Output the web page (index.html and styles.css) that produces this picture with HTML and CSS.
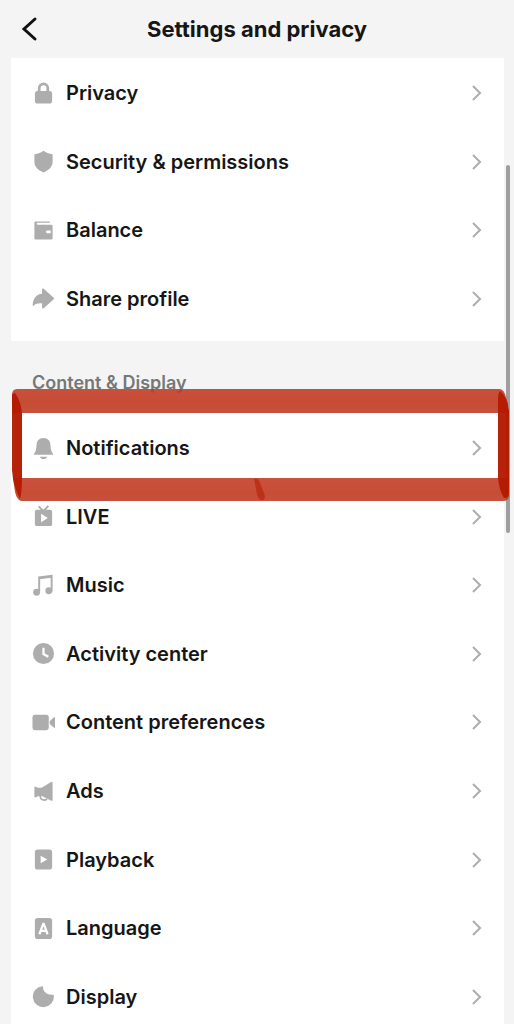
FILE: index.html
```html
<!DOCTYPE html>
<html lang="en">
<head>
<meta charset="utf-8">
<meta name="viewport" content="width=device-width, initial-scale=1">
<title>Settings and privacy</title>
<link rel="stylesheet" href="styles.css">
</head>
<body>
<svg class="defs" aria-hidden="true">
  <symbol id="chevron" viewBox="0 0 12 18"><path d="M2 2l7 7-7 7" fill="none" stroke="currentColor" stroke-width="2"/></symbol>
</svg>
<header class="header">
  <button class="back" type="button" aria-label="Back">
    <svg class="back-icon" viewBox="0 0 18 26"><path d="M15 3L4 13l11 10" fill="none" stroke="currentColor" stroke-width="3" stroke-linecap="round" stroke-linejoin="miter"/></svg>
  </button>
  <h1 class="title">Settings and privacy</h1>
</header>
<main class="content">
  <section class="card">
    <ul class="list list-account">
      <li class="row"><a class="link" href="#privacy">
        <svg class="icon" viewBox="0 0 24 24"><path d="M7.500 11V6.500a4.500 4.500 0 0 1 9 0V11" fill="none" stroke="currentColor" stroke-width="2.800"/><rect x="3" y="9.500" width="18" height="13" rx="3" fill="currentColor"/></svg>
        <span class="label">Privacy</span><svg class="chevron"><use href="#chevron"/></svg></a></li>
      <li class="row"><a class="link" href="#security">
        <svg class="icon" viewBox="0 0 24 24"><path d="M12 .8c2.500 2 5.600 3.200 9.500 3.700v8c0 5-4 8.500-9.500 11-5.500-2.500-9.500-6-9.500-11v-8C6.400 4 9.500 2.800 12 .8z" fill="currentColor"/></svg>
        <span class="label">Security &amp; permissions</span><svg class="chevron"><use href="#chevron"/></svg></a></li>
      <li class="row"><a class="link" href="#balance">
        <svg class="icon" viewBox="0 0 24 24"><path fill="currentColor" fill-rule="evenodd" d="M4 2.500h14.500V4H6a1 1 0 0 0 0 2h14a1.500 1.500 0 0 1 1.500 1.500V20a1.500 1.500 0 0 1-1.500 1.500H4A1.500 1.500 0 0 1 2.500 20V4A1.500 1.500 0 0 1 4 2.500zM16 12a1.400 1.400 0 0 0 0 2.800h3.500V12z"/></svg>
        <span class="label">Balance</span><svg class="chevron"><use href="#chevron"/></svg></a></li>
      <li class="row"><a class="link" href="#share">
        <svg class="icon" viewBox="0 0 24 24"><path fill="currentColor" d="M10.500 2.500a1 1 0 0 1 1.700-.7l10.500 9.300a1.200 1.200 0 0 1 0 1.800l-10.500 9.300a1 1 0 0 1-1.700-.8V17c-4-.3-6.500.5-8.800 2.500-.6.500-1 .2-1-.6C1 12 4.500 7.500 10.500 7z"/></svg>
        <span class="label">Share profile</span><svg class="chevron"><use href="#chevron"/></svg></a></li>
    </ul>
  </section>

  <h2 class="section-title">Content &amp; Display</h2>

  <section class="card card-display">
    <ul class="list list-display">
      <li class="row"><a class="link" href="#notifications">
        <svg class="icon" viewBox="0 0 24 24"><path fill="currentColor" d="M12 1c4.600 0 7.200 3.200 7.300 7.500.1 4.200 1 7 2.600 9 .3.500.1 1-.5 1H2.600c-.6 0-.8-.5-.5-1 1.600-2 2.500-4.800 2.600-9C4.800 4.200 7.400 1 12 1zM8 20.500h8c-.8 1.700-2.200 2.500-4 2.500s-3.200-.8-4-2.500z"/></svg>
        <span class="label">Notifications</span><svg class="chevron"><use href="#chevron"/></svg></a>
        <svg class="marker" viewBox="0 0 498 114" preserveAspectRatio="none" aria-hidden="true">
          <defs>
            <linearGradient id="band" x1="0" y1="0" x2="0" y2="1">
              <stop offset="0" stop-color="#bf3a24"/>
              <stop offset=".3" stop-color="#c2371e"/>
              <stop offset=".65" stop-color="#c03419"/>
              <stop offset="1" stop-color="#bb3a24"/>
            </linearGradient>
          </defs>
          <path d="M6 1H488Q492 1 494 6L497 16V25H1V7Q1 1 6 1z" fill="url(#band)" fill-opacity=".88"/>
          <path d="M2 90H498V107Q498 113 492 113H10Q6 112 4 104z" fill="url(#band)" fill-opacity=".88"/>
          <path d="M4 5Q10 13 11 25V90Q11 104 9 111Q2 98 1 82V8Q1 5 4 5zM489 3Q496 8 498 23V105Q498 110 493 110Q488 102 487 90V12Q487 5 489 3z" fill="#b41a00" fill-opacity=".96"/>
          <path d="M243 91Q248 90 249 95L254 108Q254 113 250 112Q247 111 246 106z" fill="#b92008" fill-opacity=".65"/>
        </svg>
      </li>
      <li class="row"><a class="link" href="#live">
        <svg class="icon" viewBox="0 0 24 24"><path d="M7 1.500L11.500 6M17 1L12.500 6" stroke="currentColor" stroke-width="2"/><path fill="currentColor" fill-rule="evenodd" d="M5 5h14a2 2 0 0 1 2 2v13a2 2 0 0 1-2 2H5a2 2 0 0 1-2-2V7a2 2 0 0 1 2-2zM9.500 9v9l7-4.500z"/></svg>
        <span class="label">LIVE</span><svg class="chevron"><use href="#chevron"/></svg></a></li>
      <li class="row"><a class="link" href="#music">
        <svg class="icon" viewBox="0 0 24 24"><path d="M7.500 19V3.500l13-1.500V18M8 4.500l12-1.500" fill="none" stroke="currentColor" stroke-width="2"/><circle cx="4.800" cy="19" r="3.600" fill="currentColor"/><circle cx="17.500" cy="17.500" r="3.600" fill="currentColor"/></svg>
        <span class="label">Music</span><svg class="chevron"><use href="#chevron"/></svg></a></li>
      <li class="row"><a class="link" href="#activity">
        <svg class="icon" viewBox="0 0 24 24"><circle cx="12" cy="12" r="11" fill="currentColor"/><path d="M12 6v6.500l5 3" fill="none" stroke="#fff" stroke-width="2.400"/></svg>
        <span class="label">Activity center</span><svg class="chevron"><use href="#chevron"/></svg></a></li>
      <li class="row"><a class="link" href="#preferences">
        <svg class="icon" viewBox="0 0 24 24"><rect x=".5" y="4" width="17" height="16" rx="2.500" fill="currentColor"/><path d="M18.500 10.500l4.500-4a.6.6 0 0 1 1 .5v10a.6.6 0 0 1-1 .5l-4.500-4z" fill="currentColor"/></svg>
        <span class="label">Content preferences</span><svg class="chevron"><use href="#chevron"/></svg></a></li>
      <li class="row"><a class="link" href="#ads">
        <svg class="icon" viewBox="0 0 24 24"><path fill="currentColor" d="M20 2c.9-.4 1.500-.1 1.500.8v18c0 .9-.6 1.200-1.500.8L11 17H5.500l-1 1H2.500V7h2l1 1H10z"/><path d="M8.500 16c0 3.500 1.800 5 4.200 5 1.200 0 2.200-.4 3-1.300" fill="none" stroke="currentColor" stroke-width="1.600"/></svg>
        <span class="label">Ads</span><svg class="chevron"><use href="#chevron"/></svg></a></li>
      <li class="row"><a class="link" href="#playback">
        <svg class="icon" viewBox="0 0 24 24"><path fill="currentColor" fill-rule="evenodd" d="M6 1.500h12a3 3 0 0 1 3 3v15a3 3 0 0 1-3 3H6a3 3 0 0 1-3-3v-15a3 3 0 0 1 3-3zM9 8v8l7-4z"/></svg>
        <span class="label">Playback</span><svg class="chevron"><use href="#chevron"/></svg></a></li>
      <li class="row"><a class="link" href="#language">
        <svg class="icon" viewBox="0 0 24 24"><rect x="3" y="1" width="18" height="22" rx="3" fill="currentColor"/><path d="M7.700 18L12 6.500 16.300 18M9 14.500h6" fill="none" stroke="#fff" stroke-width="2.300" stroke-linejoin="bevel"/></svg>
        <span class="label">Language</span><svg class="chevron"><use href="#chevron"/></svg></a></li>
      <li class="row"><a class="link" href="#display">
        <svg class="icon" viewBox="0 0 24 24"><path fill="currentColor" d="M10.500 1.200c.8 0 1 .5 1 1.200.2 4.500 3.500 8 9.700 7.800.9-.1 1.600.3 1.600 1A11 11 0 1 1 10.500 1.200z"/></svg>
        <span class="label">Display</span><svg class="chevron"><use href="#chevron"/></svg></a></li>
    </ul>
  </section>
</main>
<div class="scroll-thumb" aria-hidden="true"></div>
</body>
</html>
```
FILE: styles.css
```css
* { box-sizing: border-box; }

body {
  position: relative;
  display: flex;
  flex-direction: column;
  height: 100vh;
  margin: 0;
  overflow: hidden;
  background: #f4f4f4;
  color: #161616;
  font-family: Inter, "Liberation Sans", sans-serif;
}

.defs { position: absolute; width: 0; height: 0; }

.header {
  display: grid;
  grid-template-columns: 38px 1fr 38px;
  align-items: center;
  flex: none;
  height: 58px;
  padding: 0 10px;
}

.back {
  display: flex;
  justify-content: center;
  padding: 0;
  border: 0;
  background: none;
  color: #111;
}

.back-icon { width: 18px; height: 26px; }

.title {
  margin: 0;
  font-size: 22px;
  font-weight: 700;
  line-height: 28px;
  text-align: center;
}

.content {
  flex: 1;
  min-height: 0;
  padding: 0 10px 0 11px;
  overflow: hidden;
}

.card { padding: 1px 0 8px; background: #fff; }

.list {
  display: grid;
  grid-auto-rows: 1fr;
  margin: 0;
  padding: 0;
  list-style: none;
}

.list-account { min-height: 274px; }
.list-display { min-height: 617px; }

.row { position: relative; }

.link {
  display: flex;
  align-items: center;
  gap: 11px;
  height: 100%;
  padding: 0 21px;
  color: inherit;
  text-decoration: none;
}

.icon { flex: none; width: 23px; height: 23px; color: #adadad; }

.label {
  flex: 1;
  font-size: 20px;
  font-weight: 600;
  line-height: 28px;
}

.chevron { flex: none; width: 12px; height: 18px; color: #adadad; }

.section-title {
  margin: 0;
  padding: 30px 21px 8px;
  color: #777;
  font-size: 18px;
  font-weight: 600;
  line-height: 24px;
}

.card-display { padding-top: 11px; }

.marker {
  position: absolute;
  top: -26px;
  left: 0;
  z-index: 2;
  width: calc(100% + 5px);
  height: 114px;
  pointer-events: none;
}

.scroll-thumb {
  position: absolute;
  top: 165px;
  right: 4px;
  width: 4px;
  height: 368px;
  border-radius: 2px;
  background: #9e9e9e;
}
```
